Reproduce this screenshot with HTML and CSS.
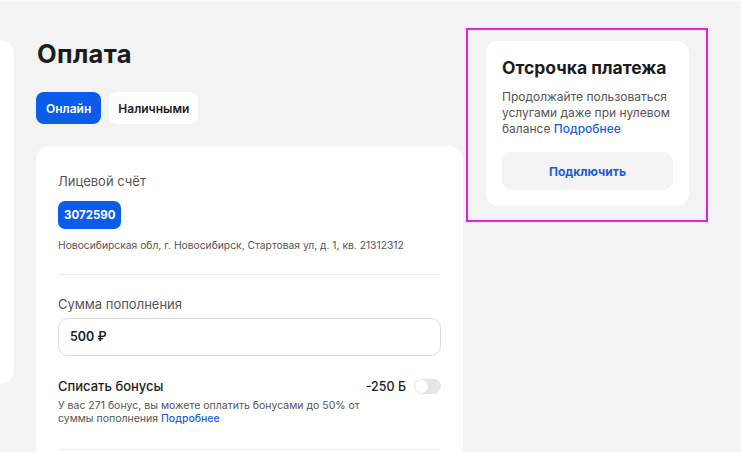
FILE: index.html
```html
<!DOCTYPE html>
<html lang="ru">
<head>
<meta charset="utf-8">
<link rel="stylesheet" href="styles.css">
</head>
<body>
<div class="topline"></div>
<div class="page">
  <aside class="side"></aside>
  <main class="main">
    <h1 class="title">Оплата</h1>
    <div class="tabs">
      <button class="tab tab-active">Онлайн</button>
      <button class="tab">Наличными</button>
    </div>
    <section class="card">
      <div class="label">Лицевой счёт</div>
      <div class="badge">3072590</div>
      <div class="address">Новосибирская обл, г. Новосибирск, Стартовая ул, д. 1, кв. 21312312</div>
      <div class="divider"></div>
      <div class="label label-sum">Сумма пополнения</div>
      <div class="input">500 ₽</div>
      <div class="bonus-row">
        <span class="bonus-title">Списать бонусы</span>
        <span class="bonus-right"><span class="bonus-amount">-250 Б</span><span class="toggle"><span class="knob"></span></span></span>
      </div>
      <div class="bonus-text"><span>У вас 271 бонус, вы можете оплатить бонусами до 50% от</span><br><span>суммы пополнения</span> <a class="link">Подробнее</a></div>
      <div class="divider divider-bottom"></div>
    </section>
  </main>
  <div class="highlight">
    <section class="promo">
      <h2 class="promo-title">Отсрочка платежа</h2>
      <p class="promo-text"><span>Продолжайте пользоваться</span><br><span>услугами даже при нулевом</span><br><span>балансе</span> <a class="link">Подробнее</a></p>
      <button class="promo-btn">Подключить</button>
    </section>
  </div>
</div>
</body>
</html>
```
FILE: styles.css
```css
html, body {
  margin: 0;
  padding: 0;
  height: 100%;
  background: #f3f3f3;
  font-family: "Inter", "Noto Sans", sans-serif;
  color: #1c1c1c;
  overflow: hidden;
}
.topline {
  height: 2px;
  background: #fafafa;
}
.page {
  display: flex;
  align-items: flex-start;
}
.side {
  width: 14px;
  height: 344px;
  margin-top: 38px;
  background: #fff;
  border-radius: 0 14px 14px 0;
  flex: none;
}
.main {
  width: 427px;
  margin-left: 22px;
  flex: none;
}
.title {
  margin: 36px 0 0 1px;
  font-size: 25.5px;
  line-height: 32px;
  font-weight: 700;
  letter-spacing: 0.3px;
}
.tabs {
  display: flex;
  gap: 8px;
  margin-top: 22px;
}
.tab {
  height: 32px;
  padding: 0 9px;
  border: none;
  border-radius: 8px;
  background: #fff;
  font-family: inherit;
  font-size: 12px;
  font-weight: 600;
  color: #1c1c1c;
}
.tab-active {
  background: #0b5ce8;
  color: #fff;
  padding: 0 10px;
}
.card {
  margin-top: 22px;
  background: #fff;
  border-radius: 14px 14px 0 0;
  padding: 27px 22px 0 22px;
  height: 300px;
}
.label {
  font-size: 13px;
  line-height: 16px;
  color: #555;
}
.badge {
  display: inline-block;
  margin-top: 12px;
  height: 28px;
  line-height: 28px;
  padding: 0 6px;
  border-radius: 7px;
  background: #0b5ce8;
  color: #fff;
  font-size: 11.5px;
  font-weight: 700;
}
.address {
  margin-top: 9px;
  font-size: 10.3px;
  line-height: 14px;
  color: #555;
}
.divider {
  height: 1px;
  background: #eeeeee;
  margin-top: 22px;
}
.label-sum {
  margin-top: 21px;
}
.input {
  margin-top: 6px;
  height: 36px;
  border: 1px solid #dcdcdc;
  border-radius: 10px;
  padding: 0 11px;
  line-height: 36px;
  font-size: 12.5px;
  font-weight: 600;
}
.bonus-row {
  display: flex;
  justify-content: space-between;
  align-items: center;
  margin-top: 22px;
  height: 16px;
}
.bonus-title {
  font-size: 13px;
  font-weight: 500;
}
.bonus-right {
  display: flex;
  align-items: center;
  gap: 8px;
}
.bonus-amount {
  font-size: 12.5px;
  font-weight: 500;
}
.toggle {
  width: 27px;
  height: 15px;
  border-radius: 8px;
  background: #e6e6e6;
  display: flex;
  align-items: center;
  padding-left: 1px;
  box-sizing: border-box;
}
.knob {
  width: 13px;
  height: 13px;
  border-radius: 50%;
  background: #fff;
}
.bonus-text {
  margin-top: 5px;
  font-size: 10.5px;
  line-height: 13px;
  color: #555;
}
.link {
  color: #1a5fd8;
  font-weight: 500;
}
.divider-bottom {
  margin-top: 24px;
}
.highlight {
  margin-left: 3px;
  margin-top: 26px;
  width: 242px;
  box-sizing: border-box;
  border: 2px solid #e61fe6;
  padding: 11px 17px 14px 18px;
  flex: none;
}
.promo {
  background: #fff;
  border-radius: 12px;
  padding: 16px 16px 16px 16px;
}
.promo-title {
  margin: 0;
  font-size: 17.5px;
  line-height: 22px;
  font-weight: 700;
}
.promo-text {
  margin: 10px 0 0 0;
  font-size: 12px;
  line-height: 16px;
  color: #555;
}
.promo-btn {
  display: block;
  width: 100%;
  height: 38px;
  margin-top: 15px;
  border: none;
  border-radius: 10px;
  background: #f3f3f3;
  color: #1a5fd8;
  font-family: inherit;
  font-size: 12px;
  font-weight: 700;
}
```
